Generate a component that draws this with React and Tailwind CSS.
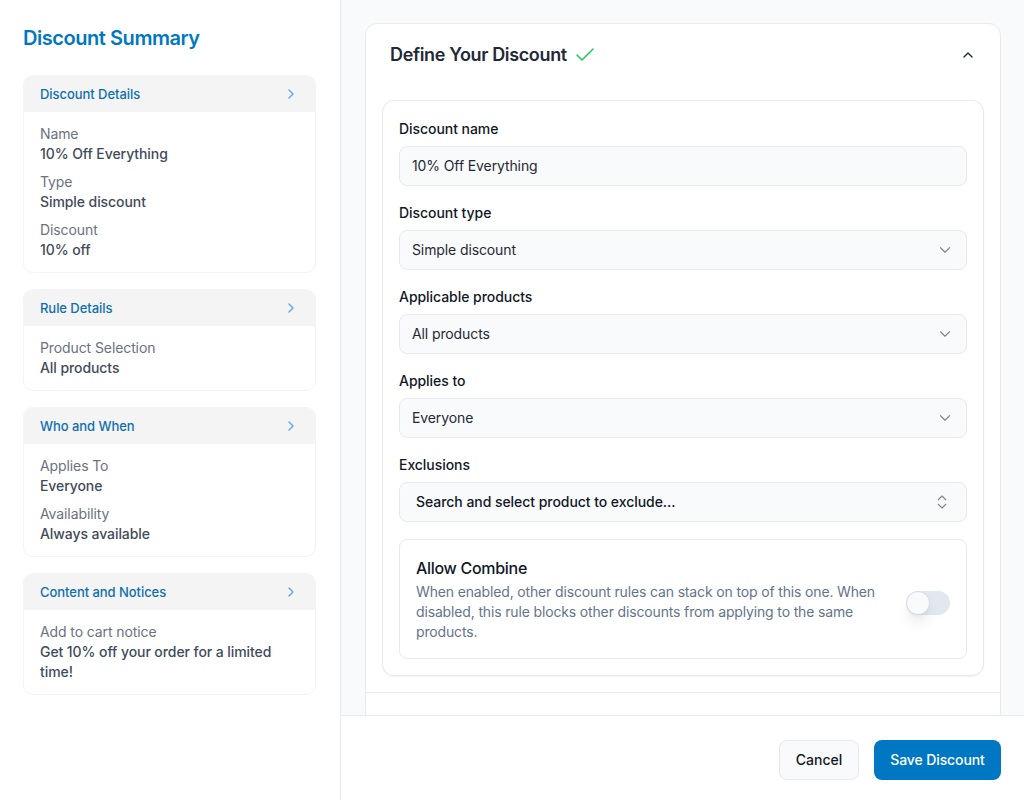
import React from 'react'
import { ChevronRight, ChevronUp, ChevronDown, ChevronsUpDown, Check } from 'lucide-react'

const summary = [
  { title: 'Discount Details', rows: [['Name', '10% Off Everything'], ['Type', 'Simple discount'], ['Discount', '10% off']] },
  { title: 'Rule Details', rows: [['Product Selection', 'All products']] },
  { title: 'Who and When', rows: [['Applies To', 'Everyone'], ['Availability', 'Always available']] },
  { title: 'Content and Notices', rows: [['Add to cart notice', 'Get 10% off your order for a limited time!']] },
]

function SummaryCard({ title, rows }) {
  return (
    <div className="rounded-[10px] border border-[#f3f4f6] overflow-hidden">
      <div className="flex items-center justify-between h-[37px] -mt-px -mx-px pl-[17px] pr-[17px] bg-[#f4f4f5]">
        <span className="text-[13px] leading-5 font-medium tracking-[-0.05px] text-[#0f6fae]">{title}</span>
        <ChevronRight className="w-4 h-4 text-[#60a5fa]" strokeWidth={2} />
      </div>
      <div className="flex flex-col gap-2 px-4 py-3">
        {rows.map(([k, v]) => (
          <div key={k} className="text-sm leading-5">
            <div className="text-[#6b7280] tracking-[-0.1px]">{k}</div>
            <div className="font-medium text-[#414b5a] tracking-[-0.08px]">{v}</div>
          </div>
        ))}
      </div>
    </div>
  )
}

function Field({ label, value, chevron }) {
  return (
    <div>
      <div className="text-sm leading-5 font-medium tracking-[-0.05px] text-[#111827] mb-[7px]">{label}</div>
      <div className="flex items-center justify-between h-10 pl-3 pr-3 rounded-lg border border-[#e6eaf1] bg-[#f9fafb] text-sm tracking-[-0.11px] text-[#1f2937]">
        <span>{value}</span>
        {chevron && <ChevronDown className="w-[18px] h-[18px] text-[#808690]" strokeWidth={1.5} />}
      </div>
    </div>
  )
}

export default function App() {
  return (
    <div className="flex h-[800px] w-[1024px] overflow-hidden bg-white font-['Inter',sans-serif]">
      <aside className="w-[341px] shrink-0 border-r border-[#e6eaf1] pl-[23px] pr-[24px] pt-6">
        <h2 className="text-xl leading-7 font-semibold tracking-[-0.45px] text-[#0077c2] mb-[23px]">Discount Summary</h2>
        <div className="flex flex-col gap-4">
          {summary.map(s => <SummaryCard key={s.title} {...s} />)}
        </div>
      </aside>

      <main className="flex-1 min-w-0 flex flex-col">
        <div className="flex-1 min-h-0 overflow-hidden bg-[#f9fafb] pt-[23px] pl-6 pr-[23px]">
          <div className="rounded-xl border border-[#e6eaf1] bg-white">
            <div className="flex items-center justify-between h-[62px] pl-6 pr-6">
              <div className="flex items-center gap-[6px]">
                <span className="text-lg leading-7 font-semibold tracking-[-0.35px] text-[#1f2937]">Define Your Discount</span>
                <Check className="w-6 h-6 text-[#22c55e]" strokeWidth={1.5} />
              </div>
              <ChevronUp className="w-4 h-4 text-[#1f2937]" strokeWidth={2} />
            </div>
            <div className="px-4 pt-[14px] pb-4 border-b border-[#e6eaf1]">
              <div className="flex flex-col gap-[17px] rounded-xl border border-[#e6eaf1] bg-white p-4 pt-[18px] shadow-xs">
                <Field label="Discount name" value="10% Off Everything" />
                <Field label="Discount type" value="Simple discount" chevron />
                <Field label="Applicable products" value="All products" chevron />
                <Field label="Applies to" value="Everyone" chevron />
                <div>
                  <div className="text-sm leading-5 font-medium tracking-[-0.05px] text-[#111827] mb-[7px]">Exclusions</div>
                  <div className="flex items-center justify-between h-10 pl-4 pr-[15px] rounded-lg border border-[#e6eaf1] bg-[#f9fafb] text-sm font-medium tracking-[-0.05px] text-[#111827]">
                    <span>Search and select product to exclude...</span>
                    <ChevronsUpDown className="w-[18px] h-[18px] text-[#808690]" strokeWidth={1.5} />
                  </div>
                </div>
                <div className="flex items-center justify-between rounded-lg border border-[#e6eaf1] px-4 py-4">
                  <div className="w-[474px]">
                    <div className="text-base leading-6 font-medium tracking-[-0.3px] text-[#111827] mb-[2px]">Allow Combine</div>
                    <p className="text-sm leading-5 tracking-[-0.15px] text-[#64748b]">When enabled, other discount rules can stack on top of this one. When disabled, this rule blocks other discounts from applying to the same products.</p>
                  </div>
                  <div className="relative w-11 h-6 mt-[7px] rounded-full bg-[#e2e8f0]">
                    <div className="absolute left-0 top-0 w-6 h-6 rounded-full bg-[#f8fafc] border border-[#d6dbe4] shadow-lg" />
                  </div>
                </div>
              </div>
            </div>
            <div className="h-20" />
          </div>
        </div>
        <footer className="h-[85px] shrink-0 flex items-start justify-end gap-[15px] pt-6 pr-[23px] bg-white border-t border-[#e6eaf1]">
          <button className="h-10 w-20 rounded-lg border border-[#e6eaf1] bg-[#f9fafb] text-sm font-medium text-[#111827]">Cancel</button>
          <button className="h-10 w-[127px] rounded-lg bg-[#0077c2] text-sm font-medium tracking-[-0.1px] text-white">Save Discount</button>
        </footer>
      </main>
    </div>
  )
}
